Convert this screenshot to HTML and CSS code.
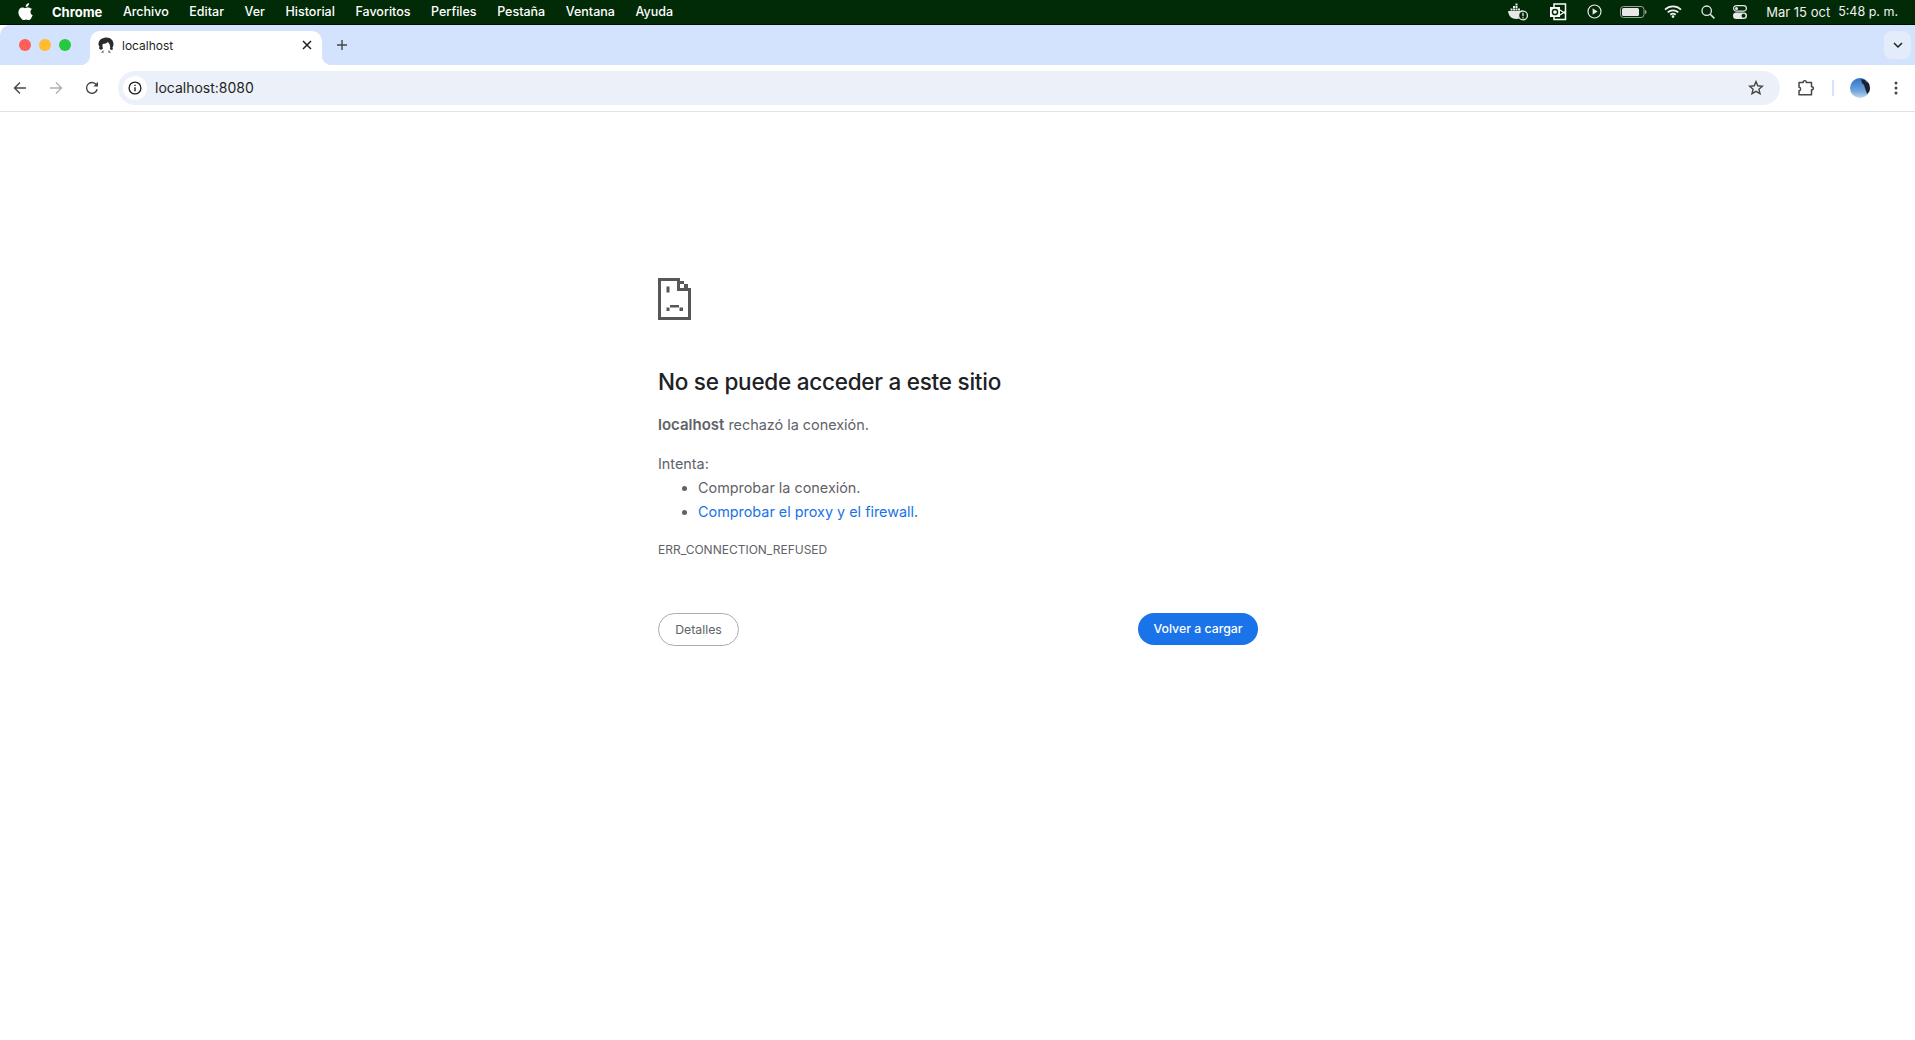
FILE: index.html
```html
<!DOCTYPE html>
<html lang="es">
<head>
  <meta charset="UTF-8">
  <meta name="viewport" content="width=device-width, initial-scale=1.0">
  <title>localhost</title>
  <link rel="stylesheet" href="styles.css">
</head>
<body>

  <div class="menubar">
    <svg class="apple" width="15" height="17" viewBox="0 0 15 17"><path fill="#fff" d="M11.1 0c.1 1-.3 2-.9 2.700-.6.7-1.500 1.300-2.500 1.200-.1-1 .4-2 .9-2.600C9.200.6 10.200.1 11.100 0zM14.300 5.800c-1.200.8-1.800 1.800-1.800 3.100 0 1.500.9 2.600 2.200 3.200-.4 1.200-1 2.300-1.700 3.300-.7 1-1.400 1.800-2.400 1.800s-1.300-.6-2.500-.6-1.600.6-2.500.6c-1 0-1.700-.9-2.500-2C1.200 13.500.4 11.300.4 9.300c0-3.100 2-4.800 4-4.800 1 0 1.900.7 2.600.7.600 0 1.600-.7 2.800-.7 1.300 0 2.600.5 3.500 1.300z"/></svg>
    <span class="menu-item app-name">Chrome</span>
    <span class="menu-item">Archivo</span>
    <span class="menu-item">Editar</span>
    <span class="menu-item">Ver</span>
    <span class="menu-item">Historial</span>
    <span class="menu-item">Favoritos</span>
    <span class="menu-item">Perfiles</span>
    <span class="menu-item">Pestaña</span>
    <span class="menu-item">Ventana</span>
    <span class="menu-item">Ayuda</span>

    <div class="status">
      <svg width="20" height="18" viewBox="0 0 20 18"><path fill="#e8e8e8" d="M5 3h2v2H5zM7.500 3h2v2h-2zM7.500.5h2v2h-2zM2.500 5.500h2v2h-2zM5 5.500h2v2H5zM7.500 5.500h2v2h-2zM10 5.500h2v2h-2zM0 8h12.500c.6-.9 1.700-1.200 2.500-.8-1.800.6-3.500 2-3.800 4.500-.2 1.300.2 2.400.7 3.300-1 .6-2.200 1-3.400 1C3.500 16 .5 13 0 8z"/><circle cx="15" cy="12.500" r="4.400" fill="#012b06" stroke="#e8e8e8" stroke-width="1.300"/><path stroke="#e8e8e8" stroke-width="1.300" d="M15 9.800v3.400M15 14.200v1.200"/></svg>
      <svg class="outlook" width="17" height="18" viewBox="0 0 17 18"><path fill="none" stroke="#fff" stroke-width="1.500" d="M4 4V1h11.500v15.500H4V14"/><path fill="#fff" d="M0 4h10v10H0z"/><circle cx="5" cy="9" r="2.600" fill="none" stroke="#012b06" stroke-width="1.500"/><path fill="none" stroke="#fff" stroke-width="1.200" d="M10 7l6 4M10 12l6-4"/></svg>
      <svg class="play" width="15" height="15" viewBox="0 0 15 15"><circle cx="7.500" cy="7.500" r="6.500" fill="none" stroke="#e8e8e8" stroke-width="1.200"/><path fill="#e8e8e8" d="M5.600 4.300l5 3.200-5 3.200z"/></svg>
      <svg class="battery" width="27" height="12" viewBox="0 0 27 12"><rect x=".5" y=".5" width="23.500" height="11" rx="3" fill="none" stroke="#9aa39b"/><rect x="2" y="2" width="17" height="8" rx="1.500" fill="#e8e8e8"/><path fill="#9aa39b" d="M25 4c1 .3 1.500 1 1.500 2s-.5 1.700-1.500 2z"/></svg>
      <svg class="wifi" width="18" height="13" viewBox="0 0 18 13"><path fill="none" stroke="#f0f0f0" stroke-width="1.800" d="M1 4.600c4.600-4.200 11.400-4.200 16 0M3.700 7.300c3-2.700 7.600-2.700 10.600 0M6.300 9.800c1.500-1.300 3.900-1.300 5.400 0"/><circle cx="9" cy="11.600" r="1.300" fill="#f0f0f0"/></svg>
      <svg class="search" width="14" height="14" viewBox="0 0 14 14"><circle cx="5.700" cy="5.700" r="4.700" fill="none" stroke="#e8e8e8" stroke-width="1.300"/><path stroke="#e8e8e8" stroke-width="1.500" d="M9.200 9.200l4.200 4.200"/></svg>
      <svg class="control" width="14" height="14" viewBox="0 0 14 14"><rect x=".6" y=".6" width="12.800" height="5.600" rx="2.800" fill="none" stroke="#e8e8e8" stroke-width="1.200"/><circle cx="3.500" cy="3.400" r="1.500" fill="#e8e8e8"/><rect y="7.500" width="14" height="6.500" rx="3.250" fill="#e8e8e8"/><circle cx="10.500" cy="10.750" r="2" fill="#012b06"/></svg>
      <span class="clock">Mar 15 oct</span>
      <span class="clock clock-time">5:48 p. m.</span>
    </div>
  </div>

  <div class="tabstrip">
    <div class="lights">
      <span class="light red"></span>
      <span class="light yellow"></span>
      <span class="light green"></span>
    </div>
    <div class="tab">
      <svg width="16" height="16" viewBox="0 0 16 16"><path fill="#2b2b2b" d="M7.500.5c4.500-.5 8 2.500 8 6.500 0 1.500-.5 2.500-1 3.500l.5 2-2 .5-1-1c.4-1.500.3-3-.3-4.500-.4-1-1.200-1.700-1.700-2.500C9 6 6.500 7 4.700 7c-.5 1.500-.2 3 .3 4.500l-2 1.500-2-1.500.5-2C.8 8.500.2 7.500.5 6 1 3 3.500 1 7.500.5z"/><path fill="#8d8d8d" d="M4.500 13.500h1.500l-.5 2.500H3zM10 13.500h1.500l1.500 2.500h-2.500z"/></svg>
      <span class="tab-title">localhost</span>
      <svg class="tab-close" width="10" height="10" viewBox="0 0 10 10"><path stroke="#1f1f1f" stroke-width="1.500" d="M1 1l8 8M9 1l-8 8"/></svg>
    </div>
    <svg class="new-tab" width="12" height="12" viewBox="0 0 12 12"><path stroke="#444746" stroke-width="1.400" d="M6 1v10M1 6h10"/></svg>
    <div class="tab-search">
      <svg width="10" height="7" viewBox="0 0 10 7"><path fill="none" stroke="#1f1f1f" stroke-width="1.500" d="M1 1l4 4 4-4"/></svg>
    </div>
  </div>

  <div class="toolbar">
    <svg class="nav-back" width="14" height="14" viewBox="0 0 14 14"><path fill="none" stroke="#474747" stroke-width="1.400" d="M13 7H1.500M7 1.500L1.500 7 7 12.500"/></svg>
    <svg class="nav-forward" width="14" height="14" viewBox="0 0 14 14"><path fill="none" stroke="#adafb1" stroke-width="1.400" d="M1 7h11.500M7 1.500L12.500 7 7 12.500"/></svg>
    <svg class="nav-reload" width="14" height="14" viewBox="0 0 14 14"><path fill="none" stroke="#474747" stroke-width="1.400" d="M12.200 8.200A5.400 5.400 0 1 1 11.300 3.600L12.600 5"/><path fill="#474747" d="M13 .8v4.700H8.300z"/></svg>

    <div class="omnibox">
      <span class="site-info">
        <svg width="14" height="14" viewBox="0 0 14 14"><circle cx="7" cy="7" r="5.900" fill="none" stroke="#1f1f1f" stroke-width="1.300"/><path fill="#1f1f1f" d="M6.300 6.200h1.400v4.100H6.300zM6.300 3.700h1.400v1.400H6.300z"/></svg>
      </span>
      <span class="url">localhost:8080</span>
      <svg class="star" width="16" height="15" viewBox="0 0 16 15"><path fill="none" stroke="#474747" stroke-width="1.400" d="M8 1.600l1.800 4.200 4.600.4-3.500 3 1.100 4.500L8 11.300l-4 2.400 1.100-4.500-3.500-3 4.600-.4z"/></svg>
    </div>

    <svg class="extensions" width="17" height="17" viewBox="0 0 17 17"><path fill="none" stroke="#474747" stroke-width="1.500" stroke-linejoin="round" d="M1 3.500h4.200c-.3-2.500 3.400-2.500 3.100 0h5.200v4.200c2.500-.3 2.500 3.400 0 3.100v5H1v-4c2 .3 2-3.900 0-3.600z"/></svg>
    <span class="divider"></span>
    <svg class="avatar" width="20" height="20" viewBox="0 0 20 20"><defs><linearGradient id="sky" x1="0" y1="0" x2="0" y2="1"><stop offset="0" stop-color="#2f74c8"/><stop offset=".65" stop-color="#6ea6dd"/><stop offset="1" stop-color="#c8d6e4"/></linearGradient><clipPath id="round"><circle cx="10" cy="10" r="10"/></clipPath></defs><circle cx="10" cy="10" r="10" fill="url(#sky)"/><path clip-path="url(#round)" fill="#1d2228" d="M11 1l4 1 1 2 4 1v8l-3 3-1-3-1-3-1-3-2-2z"/></svg>
    <svg class="more" width="4" height="14" viewBox="0 0 4 14"><circle cx="2" cy="2" r="1.500" fill="#474747"/><circle cx="2" cy="7" r="1.500" fill="#474747"/><circle cx="2" cy="12" r="1.500" fill="#474747"/></svg>
  </div>

  <div class="page">
    <div class="error">
      <svg class="sad-icon" width="33" height="42" viewBox="0 0 33 42"><path fill="#575757" d="M0 0h22v3H3v36h27V13h-11V0h3v10h11v32H0zM22 3h4v3h-4zM26 6h4v4h-4zM8.500 8.500h3v6h-3zM12 27h9v2.500h-9zM8.500 29.500h3V33h-3zM21.500 29.500h3.500V33h-3.500z"/></svg>
      <h1>No se puede acceder a este sitio</h1>
      <p class="summary"><strong>localhost</strong> rechazó la conexión.</p>
      <p class="try">Intenta:</p>
      <ul>
        <li>Comprobar la conexión.</li>
        <li><a href="#">Comprobar el proxy y el firewall</a>.</li>
      </ul>
      <div class="code">ERR_CONNECTION_REFUSED</div>
      <div class="buttons">
        <button class="btn-details">Detalles</button>
        <button class="btn-reload">Volver a cargar</button>
      </div>
    </div>
  </div>

</body>
</html>
```

FILE: styles.css
```css
html, body {
  margin: 0;
  height: 100%;
  background-color: #ffffff;
  overflow: hidden;
  font-family: Inter, "Liberation Sans", sans-serif;
}

.menubar {
  display: flex;
  align-items: center;
  height: 23px;
  padding: 0 17px 1px 18px;
  background-color: #012b06;
  border-bottom: 1px solid #000d02;
  color: #ffffff;
  font-size: 12.5px;
  font-weight: 500;
}
.apple {
  margin-right: 19px;
}
.menu-item {
  margin-right: 20.6px;
}
.app-name {
  font-size: 13px;
  font-weight: 700;
}
.status {
  display: flex;
  align-items: center;
  margin-left: auto;
  color: #f0f0f0;
}
.outlook { margin-left: 22px; }
.play { margin-left: 20px; }
.battery { margin-left: 18px; }
.wifi { margin-left: 17px; }
.search { margin-left: 19px; }
.control { margin-left: 18px; }
.clock {
  margin-left: 19px;
  font-size: 13px;
  font-weight: 400;
}
.clock-time {
  margin-left: 8px;
  font-size: 12.5px;
}

.tabstrip {
  display: flex;
  align-items: flex-end;
  height: 40px;
  background-color: #d3e3fd;
  border-radius: 10px 0 0 0;
}
.lights {
  display: flex;
  gap: 8px;
  align-self: center;
  margin: 0 19px 0 19px;
}
.light {
  width: 12px;
  height: 12px;
  border-radius: 50%;
}
.red { background-color: #ff5f57; }
.yellow { background-color: #febc2e; }
.green { background-color: #28c840; }

.tab {
  position: relative;
  display: flex;
  align-items: center;
  box-sizing: border-box;
  width: 232px;
  height: 34px;
  padding: 0 10px 6px 8px;
  background-color: #ffffff;
  border-radius: 10px 10px 0 0;
  font-size: 12px;
  color: #1f1f1f;
}
.tab::before, .tab::after {
  content: "";
  position: absolute;
  bottom: 0;
  width: 10px;
  height: 10px;
}
.tab::before {
  left: -10px;
  background: radial-gradient(circle at 0 0, #d3e3fd 10px, #ffffff 10.5px);
}
.tab::after {
  right: -10px;
  background: radial-gradient(circle at 100% 0, #d3e3fd 10px, #ffffff 10.5px);
}
.tab-title {
  margin-left: 8px;
}
.tab-close {
  margin-left: auto;
}
.new-tab {
  align-self: center;
  margin-left: 14px;
}
.tab-search {
  display: flex;
  align-items: center;
  justify-content: center;
  align-self: center;
  width: 27px;
  height: 28px;
  margin: 0 4px 0 auto;
  background-color: #e3ecfb;
  border-radius: 8px;
}

.toolbar {
  display: flex;
  align-items: center;
  box-sizing: border-box;
  height: 47px;
  padding: 0 0 1px 13px;
  background-color: #ffffff;
  border-bottom: 1px solid #e2e2e2;
  border-radius: 10px 0 0 0;
}
.nav-forward { margin-left: 22px; }
.nav-reload { margin-left: 22px; }
.omnibox {
  display: flex;
  align-items: center;
  box-sizing: border-box;
  width: 1662px;
  height: 34px;
  margin-left: 19px;
  padding: 0 16px 0 5px;
  background-color: #ecf1f9;
  border-radius: 17px;
}
.site-info {
  display: flex;
  align-items: center;
  justify-content: center;
  width: 24px;
  height: 24px;
  background-color: #ffffff;
  border-radius: 50%;
}
.url {
  margin-left: 8px;
  font-size: 14px;
  color: #1f1f1f;
}
.star {
  margin-left: auto;
}
.extensions { margin-left: 18px; }
.divider {
  width: 2px;
  height: 16px;
  margin-left: 17px;
  background-color: #d3e3fd;
}
.avatar { margin-left: 16px; }
.more { margin-left: 24px; }

.page {
  padding: 166px 0 0 1px;
}
.error {
  width: 600px;
  margin: 0 auto;
  color: #5f6368;
  font-size: 14.4px;
}
.sad-icon {
  display: block;
}
h1 {
  margin: 47px 0 0;
  font-size: 22.5px;
  font-weight: 500;
  letter-spacing: -0.25px;
  line-height: 30px;
  color: #202124;
}
.summary {
  margin: 16px 0 0;
  line-height: 24px;
}
.summary strong {
  font-size: 15px;
  font-weight: 600;
}
.try {
  margin: 15px 0 0;
  line-height: 24px;
}
ul {
  margin: 0;
  padding-left: 40px;
}
li {
  line-height: 24px;
}
li::marker {
  font-size: 14px;
}
a {
  color: #1a73e8;
  text-decoration: none;
}
.code {
  margin-top: 18px;
  font-size: 12px;
  line-height: 16px;
  color: #5f6368;
}
.buttons {
  display: flex;
  justify-content: space-between;
  margin-top: 55px;
}
button {
  font-family: Inter, "Liberation Sans", sans-serif;
  font-size: 12.3px;
  cursor: pointer;
}
.btn-details {
  width: 81px;
  height: 33px;
  background-color: #ffffff;
  border: 1px solid #a8abaf;
  border-radius: 17px;
  color: #5f6368;
  font-weight: 400;
}
.btn-reload {
  width: 120px;
  height: 32px;
  padding-bottom: 2px;
  background-color: #1a73e8;
  border: none;
  border-radius: 16px;
  color: #ffffff;
  font-weight: 500;
}
```
